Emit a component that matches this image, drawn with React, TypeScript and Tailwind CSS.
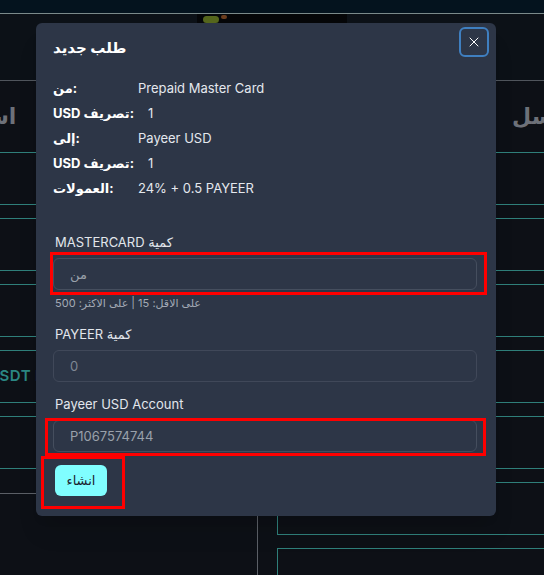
import { X } from "lucide-react";

const rows = [
  { label: "من:", value: "Prepaid Master Card" },
  { label: "USD تصريف:", value: "1", indent: true },
  { label: "إلى:", value: "Payeer USD" },
  { label: "USD تصريف:", value: "1", indent: true },
  { label: "العمولات:", value: "24% + 0.5 PAYEER" },
];

const Box = ({ children }: { children?: React.ReactNode }) => (
  <div className="h-[53px] border border-[#2f7f7a] flex items-center px-3">{children}</div>
);

export default function App() {
  return (
    <div className="relative w-[544px] h-[575px] overflow-hidden bg-[#0d1016] font-['Inter','DejaVu_Sans',sans-serif]">
      {/* page behind the dialog */}
      <div className="h-[14px] bg-[#04131e] border-b border-[#7b8a8a]" />
      <div className="h-[67px] bg-[#0c1117] border-b border-[#50555c] flex justify-center">
        <div className="w-[150px] h-full bg-[#050608] flex items-start justify-start">
          <div className="ml-[6px] mt-[2px] w-[16px] h-[7px] rounded-full bg-[#55661c]" />
          <div className="ml-[2px] mt-[1px] w-[6px] h-[4px] rounded-full bg-[#6b3d1d]" />
        </div>
      </div>
      <div className="flex gap-[19px]">
        <div className="w-[278px] -ml-[20px] shrink-0 flex flex-col">
          <div className="h-[71px] flex items-center -ml-[28px]">
            <span dir="rtl" className="text-[22px] font-semibold text-[#6d7179]">
              استلم
            </span>
          </div>
          <div className="flex flex-col gap-[13px]">
            <Box />
            <Box />
            <Box />
            <Box>
              <span className="-ml-[5px] text-[15px] font-semibold text-[#2b8783] tracking-[0.5px]">USDT kyc</span>
            </Box>
            <Box />
          </div>
          <div className="mt-[24px] h-[120px] border-t border-r border-[#5b5f66]" />
        </div>
        <div className="w-[300px] shrink-0 flex flex-col">
          <div className="h-[71px] flex items-center pl-[235px]">
            <span dir="rtl" className="text-[22px] font-semibold text-[#6d7179] whitespace-nowrap">
              ارسل
            </span>
          </div>
          <div className="flex flex-col gap-[13px]">
            <Box />
            <Box />
            <Box />
            <Box />
            <Box />
            <Box />
            <Box />
          </div>
        </div>
      </div>

      {/* dialog */}
      <div className="absolute left-[36px] top-[23px] w-[460px] h-[493px] rounded-md bg-[#2d3647] shadow-xl pl-[17px] pr-[19px] pt-[13px]">
        <div className="flex items-start justify-between">
          <h2 className="text-[15px] leading-6 font-bold text-white">طلب جديد</h2>
          <button className="-mt-[9px] -mr-[12px] w-[30px] h-[30px] rounded-md border-2 border-[#3f7fc0] flex items-center justify-center text-white">
            <X size={16} strokeWidth={1.5} />
          </button>
        </div>

        <div className="mt-[16px] text-[13px] leading-[25px]">
          {rows.map((r, i) => (
            <div key={i} className="flex">
              <div className="w-[85px] font-bold text-white">{r.label}</div>
              <div className={r.indent ? "pl-[10px] text-[#e4e8ee]" : "text-[#e4e8ee]"}>{r.value}</div>
            </div>
          ))}
        </div>

        <div className="mt-[31px]">
          <label className="block text-[13px] leading-5 pl-[2px] text-[#e2e6ec]">MASTERCARD كمية</label>
          <div className="relative mt-[6px]">
            <input
              placeholder="من"
              className="w-full h-[32px] rounded-md bg-[#2d3647] border border-[#454e5e] px-4 text-[13px] text-[#cbd2dc] placeholder:text-[#9aa1ab] outline-none"
            />
            <div className="absolute -left-[3px] -right-[10px] -top-[6px] -bottom-[5px] border-[3px] border-[#ff0000] pointer-events-none" />
          </div>
          <p dir="rtl" className="text-left mt-[5px] text-[11px] leading-4 pl-[2px] text-[#a3aab5]">
            على الاقل: 15 | على الاكثر: 500
          </p>
        </div>

        <div className="mt-[13px]">
          <label className="block text-[13px] leading-5 pl-[2px] text-[#e2e6ec]">PAYEER كمية</label>
          <input
            value="0"
            readOnly
            className="mt-[6px] w-full h-[32px] rounded-md bg-[#2d3647] border border-[#404859] px-4 text-[13px] text-[#7f8794] outline-none"
          />
        </div>

        <div className="mt-[12px]">
          <label className="block text-[13px] leading-5 pl-[2px] text-[#e2e6ec]">Payeer USD Account</label>
          <div className="relative mt-[6px]">
            <input
              value="P1067574744"
              readOnly
              className="w-full h-[32px] rounded-md bg-[#2d3647] border border-[#454e5e] px-4 text-[13px] text-[#9aa1ab] outline-none"
            />
            <div className="absolute -left-[8px] -right-[9px] -top-[2px] -bottom-[4px] border-[3px] border-[#ff0000] pointer-events-none" />
          </div>
        </div>

        <div className="relative mt-[13px] ml-[2px] inline-block">
          <button className="w-[52px] h-[31px] rounded-md bg-[#80feff] text-[13px] font-medium text-[#1a202c]">
            انشاء
          </button>
          <div className="absolute -left-[14px] -right-[18px] -top-[9px] -bottom-[13px] border-[3px] border-[#ff0000] pointer-events-none" />
        </div>
      </div>
    </div>
  );
}
